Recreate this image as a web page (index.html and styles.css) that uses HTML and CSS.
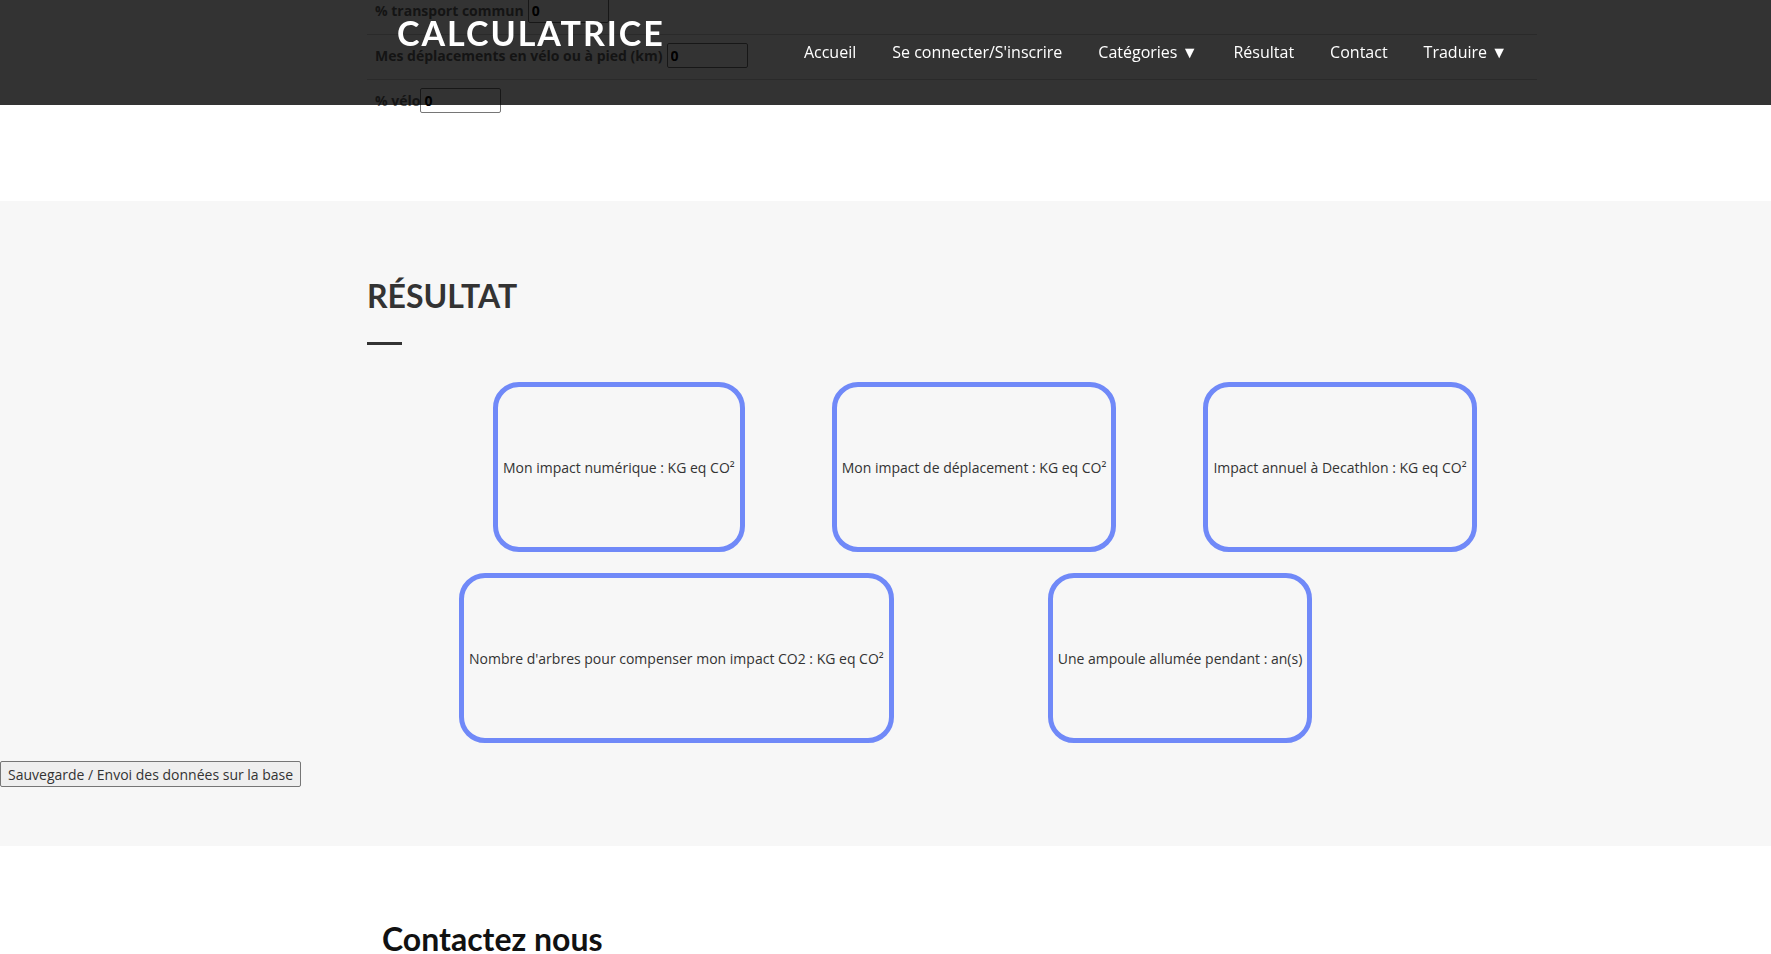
FILE: index.html
```html
<!DOCTYPE html>
<html lang="fr">
<head>
<meta charset="utf-8">
<title>Calculatrice</title>
<link rel="stylesheet" href="styles.css">
</head>
<body>
<header class="topbar">
  <div class="container topbar-inner">
    <div class="logo">CALCULATRICE</div>
    <nav class="nav">
      <a href="#">Accueil</a>
      <a href="#">Se connecter/S'inscrire</a>
      <a href="#">Catégories ▼</a>
      <a href="#">Résultat</a>
      <a href="#">Contact</a>
      <a href="#">Traduire ▼</a>
    </nav>
  </div>
</header>

<form class="container calc-form">
  <div class="row"><label>% transport commun</label><input type="text" value="0"></div>
  <div class="row"><label>Mes déplacements en vélo ou à pied (km)</label><input type="text" value="0"></div>
  <div class="row last"><label class="tight">% vélo</label><input type="text" value="0"></div>
</form>

<section class="result">
  <div class="container">
    <h2 class="title">RÉSULTAT</h2>
    <div class="bar"></div>
  </div>
  <div class="cards cards-1">
    <div class="card">Mon impact numérique : KG eq CO²</div>
    <div class="card">Mon impact de déplacement : KG eq CO²</div>
    <div class="card">Impact annuel à Decathlon : KG eq CO²</div>
  </div>
  <div class="cards cards-2">
    <div class="card">Nombre d'arbres pour compenser mon impact CO2 : KG eq CO²</div>
    <div class="card">Une ampoule allumée pendant : an(s)</div>
  </div>
  <button type="button" class="save">Sauvegarde / Envoi des données sur la base</button>
</section>

<section class="contact">
  <div class="container">
    <h2 class="contact-title">Contactez nous</h2>
  </div>
</section>
</body>
</html>
```

FILE: styles.css
```css
html, body {
  margin: 0;
  padding: 0;
  background: #ffffff;
  font-family: "Open Sans", "Liberation Sans", sans-serif;
  color: #333;
}

.container {
  width: 1170px;
  margin-left: 367px;
  box-sizing: border-box;
}

/* header overlay */
.topbar {
  position: fixed;
  top: 0;
  left: 0;
  right: 0;
  height: 105px;
  background: rgba(0, 0, 0, 0.8);
  z-index: 10;
}
.topbar-inner {
  display: flex;
  justify-content: space-between;
  align-items: flex-start;
  padding: 0 12px 0 15px;
}
.logo {
  font-family: Lato, "Liberation Sans", sans-serif;
  font-weight: 700;
  font-size: 34px;
  letter-spacing: 2px;
  line-height: 1;
  color: #fff;
  padding: 0 15px;
  margin-top: 16px;
}
.nav {
  display: flex;
  margin-top: 40px;
}
.nav a {
  color: #fff;
  text-decoration: none;
  font-size: 16px;
  line-height: 24px;
  padding: 0 18px;
}

/* form behind header */
.calc-form {
  margin-top: -10px;
}
.calc-form .row {
  display: flex;
  align-items: flex-start;
  padding: 8px 0 11px 8px;
  border-bottom: 1px solid #d2d2d2;
}
.calc-form .row.last {
  border-bottom: none;
}
.calc-form label {
  font-weight: 700;
  font-size: 14px;
  line-height: 25px;
  color: #666;
  margin-right: 4px;
}
.calc-form label.tight {
  margin-right: 0;
}
.calc-form input {
  width: 81px;
  height: 25px;
  box-sizing: border-box;
  border: 1px solid #767676;
  border-radius: 2px;
  padding: 0 3px;
  font-family: "Open Sans", sans-serif;
  font-weight: 700;
  font-size: 14px;
  color: #000;
  background: transparent;
}

/* result section */
.result {
  background: #f7f7f7;
  margin-top: 77px;
  padding: 75px 0 59px;
}
.title {
  font-family: Lato, "Liberation Sans", sans-serif;
  font-weight: 700;
  font-size: 32px;
  line-height: 40px;
  margin: 0;
  color: #333;
}
.bar {
  width: 35px;
  height: 3px;
  background: #333;
  margin-top: 26px;
}
.cards {
  display: flex;
  align-items: flex-start;
}
.cards-1 {
  margin-top: 37px;
  padding-left: 493px;
  gap: 87px;
}
.cards-2 {
  margin-top: 21px;
  padding-left: 459px;
  gap: 154px;
}
.card {
  height: 160px;
  padding: 0 5px;
  border: 5px solid #7089f8;
  border-radius: 26px;
  display: flex;
  align-items: center;
  font-size: 14px;
  color: #333;
  white-space: nowrap;
}
.save {
  display: block;
  margin-top: 18px;
  height: 26px;
  padding: 0 7px;
  font-family: "Open Sans", sans-serif;
  font-size: 14px;
  color: #333;
  background: #efefef;
  border: 1px solid #767676;
  border-radius: 2px;
}

/* contact */
.contact {
  padding-top: 73px;
}
.contact-title {
  font-family: Lato, "Liberation Sans", sans-serif;
  font-weight: 700;
  font-size: 32px;
  margin: 0 0 0 15px;
  color: #111;
}
```
